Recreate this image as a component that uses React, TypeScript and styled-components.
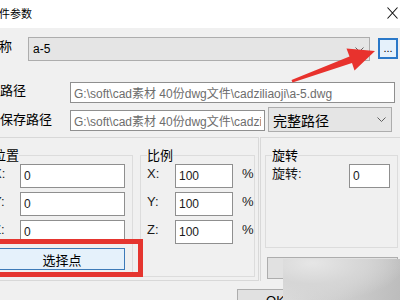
import React from 'react';
import styled, { createGlobalStyle } from 'styled-components';

const GlobalStyle = createGlobalStyle`
  html, body {
    margin: 0;
    padding: 0;
  }
  body {
    width: 400px;
    height: 300px;
    overflow: hidden;
    background: #f0f0f0;
    font-family: "Liberation Sans", "Noto Sans CJK SC", sans-serif;
  }
`;

const Viewport = styled.div`
  position: relative;
  width: 400px;
  height: 300px;
  overflow: hidden;
  background: #f0f0f0;
`;

// the screenshot is cropped: the dialog starts left of the picture
const Window = styled.div`
  width: 432px;
  margin-left: -22px;
  display: flex;
  flex-direction: column;
`;

const TitleBar = styled.div`
  height: 28px;
  background: #fff;
  display: flex;
  align-items: center;
  justify-content: space-between;
  padding: 0 12px 2px 10px;
  box-sizing: border-box;
  font-family: "Noto Sans CJK SC", sans-serif;
  font-size: 11px;
  color: #000;
`;

const Row = styled.div<{ $mt: number; $pl: number }>`
  display: flex;
  align-items: flex-start;
  margin-top: ${(p) => p.$mt}px;
  padding-left: ${(p) => p.$pl}px;
`;

const Label = styled.div<{ $w: number; $pt?: number }>`
  width: ${(p) => p.$w}px;
  padding-top: ${(p) => p.$pt ?? 0}px;
  flex-shrink: 0;
  font-family: "Noto Sans CJK SC", sans-serif;
  font-size: 13px;
  line-height: 16px;
  color: #000;
  white-space: nowrap;
`;

const TextBox = styled.input<{ $w: number; $h?: number; $muted?: boolean; $mt?: number }>`
  width: ${(p) => p.$w}px;
  height: ${(p) => p.$h ?? 24}px;
  margin: ${(p) => p.$mt ?? 0}px 0 0;
  box-sizing: border-box;
  border: 1px solid #8f8f8f;
  background: #fff;
  padding: 0 3px;
  font-family: "Liberation Sans", "Noto Sans CJK SC", sans-serif;
  font-size: 12px;
  color: ${(p) => (p.$muted ? '#6d6d6d' : '#1a1a1a')};
  outline: none;
  flex-shrink: 0;
`;

const Combo = styled.div<{ $w: number; $h: number; $size: number; $ml?: number }>`
  width: ${(p) => p.$w}px;
  height: ${(p) => p.$h}px;
  margin-left: ${(p) => p.$ml ?? 0}px;
  box-sizing: border-box;
  border: 1px solid #adadad;
  background: #e5e5e5;
  display: flex;
  align-items: center;
  justify-content: space-between;
  padding: 0 5px 0 4px;
  font-family: "Liberation Sans", "Noto Sans CJK SC", sans-serif;
  font-size: ${(p) => p.$size}px;
  color: #000;
  flex-shrink: 0;
`;

const BrowseButton = styled.button`
  width: 20px;
  height: 21px;
  margin: 1px 0 0 8px;
  box-sizing: border-box;
  border: 2px solid #2a78c8;
  background: #e5f1fb;
  padding: 0 0 3px;
  font-family: "Liberation Sans", sans-serif;
  font-size: 11px;
  line-height: 1;
  color: #000;
  display: flex;
  align-items: flex-end;
  justify-content: center;
`;

const Panels = styled.div`
  display: flex;
  margin-top: 5px;
  height: 144px;
`;

const LeftPanel = styled.div`
  width: 281px;
  box-sizing: border-box;
  border: 1px solid #d8d8d8;
  border-left: none;
  padding: 9px 0 3px 8px;
  display: flex;
  gap: 7px;
`;

const RightPanel = styled.div`
  flex: 1;
  margin-left: 1px;
  border-top: 1px solid #d8d8d8;
  border-left: 1px solid #d8d8d8;
  padding: 9px 0 0 4px;
  display: flex;
  flex-direction: column;
`;

const Group = styled.fieldset<{ $w: number; $h?: number }>`
  margin: 0;
  padding: 0 6px 6px;
  width: ${(p) => p.$w}px;
  ${(p) => (p.$h ? `height: ${p.$h}px;` : '')}
  min-width: 0;
  box-sizing: border-box;
  border: 1px solid #dcdcdc;
`;

const Caption = styled.legend`
  padding: 0;
  font-family: "Noto Sans CJK SC", sans-serif;
  font-size: 13px;
  line-height: 16px;
  color: #000;
`;

const FieldRow = styled.div`
  display: flex;
  align-items: flex-start;
  height: 24px;
  margin-top: 4px;

  &:first-of-type {
    margin-top: 1px;
  }
`;

const AxisLabel = styled.span<{ $w: number }>`
  width: ${(p) => p.$w}px;
  padding-top: 2px;
  flex-shrink: 0;
  font-size: 13px;
  line-height: 16px;
  color: #1a1a1a;
  white-space: nowrap;
`;

const Unit = styled.span`
  margin-left: 9px;
  padding-top: 2px;
  font-size: 13px;
  line-height: 16px;
  color: #1a1a1a;
`;

const PickButton = styled.button`
  width: 126px;
  height: 22px;
  margin: 4px 0 0 6px;
  box-sizing: border-box;
  border: 1px solid #3d7ab8;
  background: #e5f1fb;
  font-family: "Noto Sans CJK SC", sans-serif;
  font-size: 13px;
  color: #000;
  padding: 0;
`;

const PlainButton = styled.button<{ $w: number; $h: number; $mt: number; $ml: number }>`
  width: ${(p) => p.$w}px;
  height: ${(p) => p.$h}px;
  margin: ${(p) => p.$mt}px 0 0 ${(p) => p.$ml}px;
  box-sizing: border-box;
  border: 1px solid #adadad;
  background: #e1e1e1;
  font-family: "Liberation Sans", sans-serif;
  font-size: 13px;
  color: #000;
  padding: 0;
`;

const Footer = styled.div`
  display: flex;
  margin-top: 8px;
  padding-left: 259px;
`;

const Highlight = styled.div`
  position: absolute;
  left: -10px;
  top: 239px;
  width: 153px;
  height: 38px;
  box-sizing: border-box;
  border: 5px solid #e5352f;
`;

const Smudge = styled.div`
  position: absolute;
  left: 283px;
  top: 259px;
  width: 117px;
  height: 41px;
  background: radial-gradient(ellipse at 25% 10%, #e6e6e6 0%, #d6d6d6 40%, rgba(214, 214, 214, 0) 75%),
    linear-gradient(100deg, #dcdcdc 0%, #cfcfcf 50%, #bcbcbc 100%);
`;

const Overlay = styled.svg`
  position: absolute;
  left: 0;
  top: 0;
  pointer-events: none;
`;

const Chevron = () => (
  <svg width="9" height="5" viewBox="0 0 9 5">
    <polyline points="0.5,0.5 4.5,4.5 8.5,0.5" fill="none" stroke="#606060" strokeWidth="1" />
  </svg>
);

const CloseIcon = () => (
  <svg width="11" height="12" viewBox="0 0 11 12">
    <path d="M0.5 0.5 L10.5 11.5 M10.5 0.5 L0.5 11.5" stroke="#111" strokeWidth="1.1" fill="none" />
  </svg>
);

const path = 'G:\\soft\\cad素材 40份dwg文件\\cadziliaoji\\a-5.dwg';

const App = () => {
  return (
    <Viewport>
      <GlobalStyle />
      <Window>
        <TitleBar>
          <span>文件参数</span>
          <CloseIcon />
        </TitleBar>

        <Row $mt={9} $pl={8}>
          <Label $w={42} $pt={1}>名称</Label>
          <Combo $w={342} $h={24} $size={12}>
            <span>a-5</span>
            <Chevron />
          </Combo>
          <BrowseButton>...</BrowseButton>
        </Row>

        <Row $mt={21} $pl={22}>
          <Label $w={70}>路径</Label>
          <TextBox $w={325} $h={21} $muted readOnly value={path} />
        </Row>

        <Row $mt={4} $pl={22}>
          <Label $w={70} $pt={4}>保存路径</Label>
          <TextBox $w={195} $h={21} $mt={3} $muted readOnly value={path} />
          <Combo $w={124} $h={25} $size={14} $ml={3}>
            <span style={{ fontFamily: '"Noto Sans CJK SC", sans-serif' }}>完整路径</span>
            <Chevron />
          </Combo>
        </Row>

        <Panels>
          <LeftPanel>
            <Group $w={147}>
              <Caption>位置</Caption>
              <FieldRow>
                <AxisLabel $w={27}>X:</AxisLabel>
                <TextBox $w={105} readOnly value="0" />
              </FieldRow>
              <FieldRow>
                <AxisLabel $w={27}>Y:</AxisLabel>
                <TextBox $w={105} readOnly value="0" />
              </FieldRow>
              <FieldRow>
                <AxisLabel $w={27}>Z:</AxisLabel>
                <TextBox $w={105} readOnly value="0" />
              </FieldRow>
              <PickButton>选择点</PickButton>
            </Group>

            <Group $w={115}>
              <Caption>比例</Caption>
              <FieldRow>
                <AxisLabel $w={28}>X:</AxisLabel>
                <TextBox $w={58} readOnly value="100" />
                <Unit>%</Unit>
              </FieldRow>
              <FieldRow>
                <AxisLabel $w={28}>Y:</AxisLabel>
                <TextBox $w={58} readOnly value="100" />
                <Unit>%</Unit>
              </FieldRow>
              <FieldRow>
                <AxisLabel $w={28}>Z:</AxisLabel>
                <TextBox $w={58} readOnly value="100" />
                <Unit>%</Unit>
              </FieldRow>
            </Group>
          </LeftPanel>

          <RightPanel>
            <Group $w={133} $h={101}>
              <Caption>旋转</Caption>
              <FieldRow>
                <AxisLabel $w={77}>旋转:</AxisLabel>
                <TextBox $w={41} readOnly value="0" />
              </FieldRow>
            </Group>
            <PlainButton $w={131} $h={22} $mt={9} $ml={2} />
          </RightPanel>
        </Panels>

        <Footer>
          <PlainButton $w={77} $h={23} $mt={0} $ml={0}>OK</PlainButton>
        </Footer>
      </Window>

      <Highlight />
      <Smudge />
      <Overlay width="400" height="300" viewBox="0 0 400 300">
        <polygon
          points="291.5,80 349.5,56.5 346.5,48.5 375,51 354.5,70.5 352,63 292.5,82.5"
          fill="#e8322d"
        />
      </Overlay>
    </Viewport>
  );
};

export default App;
